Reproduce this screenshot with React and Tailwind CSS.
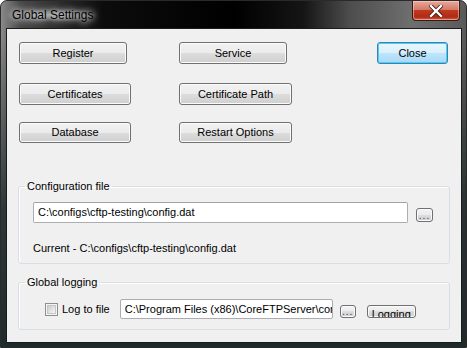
const FONT = { fontFamily: '"Liberation Sans", Arial, sans-serif' };

const btn =
  "rounded-[3px] border border-[#707070] bg-[linear-gradient(#f2f2f2_0%,#ebebeb_50%,#dddddd_50%,#cfcfcf_100%)] shadow-[inset_0_0_0_1px_#fbfbfb] text-[11px] text-black leading-none";

function WinButton({ children, className }) {
  return <button className={`${btn} ${className}`}>{children}</button>;
}

function SmallDots({ className }) {
  return (
    <button
      className={`${btn} flex items-end justify-center overflow-hidden pb-[2px] ${className}`}
    >
      <span className="block h-[4px] text-[10px] leading-[2px] tracking-[1px] text-[#1a3c8c]">...</span>
    </button>
  );
}

function TitleBar() {
  return (
    <div className="flex h-[27px] items-start">
      <div className="ml-[5px] mt-[7px] rounded-[8px] bg-[radial-gradient(closest-side,rgba(210,210,210,0.55),rgba(210,210,210,0))] px-[6px]">
        <span className="block text-[12px] leading-[14px] text-black [text-shadow:0_0_6px_#fff,0_0_10px_#fff]">
          Global Settings
        </span>
      </div>
      <button className="ml-auto mr-[6px] flex h-[20px] w-[48px] items-center justify-center rounded-b-[4px] border border-t-0 border-[#3a1a14] bg-[linear-gradient(#e8a99c_0%,#d47a68_45%,#c0391f_50%,#b02a14_85%,#d66a4e_100%)] shadow-[inset_0_0_0_1px_rgba(255,220,210,0.5)]">
        <svg width="14" height="12" viewBox="0 0 14 12">
          <path
            d="M2 1 L12 11 M12 1 L2 11"
            stroke="#3a1a14"
            strokeWidth="4"
            strokeLinecap="square"
          />
          <path
            d="M2 1 L12 11 M12 1 L2 11"
            stroke="#fff"
            strokeWidth="2.4"
            strokeLinecap="square"
          />
        </svg>
      </button>
    </div>
  );
}

function GroupBox({ label, className, children }) {
  return (
    <fieldset
      className={`ml-[11px] w-[432px] rounded-[3px] border border-[#d5dfe5] shadow-[inset_1px_1px_0_#fff] ${className}`}
    >
      <legend className="ml-[6px] px-[2px] text-[11px] leading-[13px] text-black">
        {label}
      </legend>
      {children}
    </fieldset>
  );
}

export default function App() {
  return (
    <div
      style={FONT}
      className="h-[348px] w-[467px] overflow-hidden rounded-t-[7px] border border-[#2a2a2a] bg-[linear-gradient(90deg,#8a8a8a_0%,#4a4a4a_4%,#0c0c0c_22%,#000_50%,#151515_65%,#4d4d4d_75%,#6e6e6e_88%,#5a5a5a_100%)]"
    >
      <div className="h-full bg-[linear-gradient(rgba(0,0,0,0)_0%,rgba(0,0,0,0)_10%,rgba(30,42,44,0.85)_60%,#1e2b2d_100%)]">
        <TitleBar />
        <div className="ml-[5px] h-[315px] w-[456px] border border-[#1b1b1b] bg-[#f0f0f0]">
          {/* Row 1 */}
          <div className="mt-[13px] flex">
            <WinButton className="ml-[12px] h-[22px] w-[108px]">Register</WinButton>
            <WinButton className="ml-[52px] h-[22px] w-[108px]">Service</WinButton>
            <button className="ml-[90px] h-[22px] w-[71px] rounded-[3px] border border-[#3c7fb1] bg-[linear-gradient(#eaf6fd_0%,#d9f0fc_50%,#bee6fd_50%,#a7d9f5_100%)] text-[11px] leading-none text-black shadow-[inset_0_0_0_1px_#48d0f8]">
              Close
            </button>
          </div>
          {/* Row 2 */}
          <div className="mt-[19px] flex">
            <WinButton className="ml-[12px] h-[22px] w-[112px]">Certificates</WinButton>
            <WinButton className="ml-[48px] h-[22px] w-[113px]">Certificate Path</WinButton>
          </div>
          {/* Row 3 */}
          <div className="mt-[17px] flex">
            <WinButton className="ml-[12px] h-[21px] w-[112px]">Database</WinButton>
            <WinButton className="ml-[48px] h-[21px] w-[113px]">Restart Options</WinButton>
          </div>

          <GroupBox label="Configuration file" className="mt-[37px] h-[84px]">
            <div className="mt-[9px] flex items-start">
              <div className="ml-[14px] flex h-[21px] w-[375px] items-center rounded-[2px] border border-[#abadb3] border-t-[#a0a4aa] bg-white pl-[4px] text-[11px] text-black">
                C:\configs\cftp-testing\config.dat
              </div>
              <SmallDots className="ml-[8px] mt-[6px] h-[14px] w-[17px]" />
            </div>
            <div className="ml-[14px] mt-[19px] text-[11px] leading-[13px] text-black">
              Current - C:\configs\cftp-testing\config.dat
            </div>
          </GroupBox>

          <GroupBox label="Global logging" className="mt-[12px] h-[54px]">
            <div className="mt-[10px] flex items-start">
              <div className="ml-[26px] mt-[4px] flex h-[13px] w-[13px] items-center justify-center border border-[#8e8f8f] bg-[#f4f4f4]">
                <div className="h-[9px] w-[9px] border border-[#c6c6c6] bg-[linear-gradient(135deg,#cbcbcb_0%,#f6f6f6_100%)]" />
              </div>
              <span className="ml-[4px] mt-[4px] text-[11px] leading-[13px] text-black">Log to file</span>
              <div className="ml-[10px] flex h-[20px] w-[213px] items-center overflow-hidden whitespace-nowrap rounded-[2px] border border-[#abadb3] bg-white pl-[4px] text-[11px] text-black">
                C:\Program Files (x86)\CoreFTPServer\coreftp.log
              </div>
              <SmallDots className="ml-[7px] mt-[6px] h-[13px] w-[16px]" />
              <button className={`${btn} ml-[11px] mt-[6px] h-[13px] w-[49px] overflow-hidden`}>
                <span className="block pt-[2px] text-[11px] leading-[13px]">Logging</span>
              </button>
            </div>
          </GroupBox>
        </div>
      </div>
    </div>
  );
}
